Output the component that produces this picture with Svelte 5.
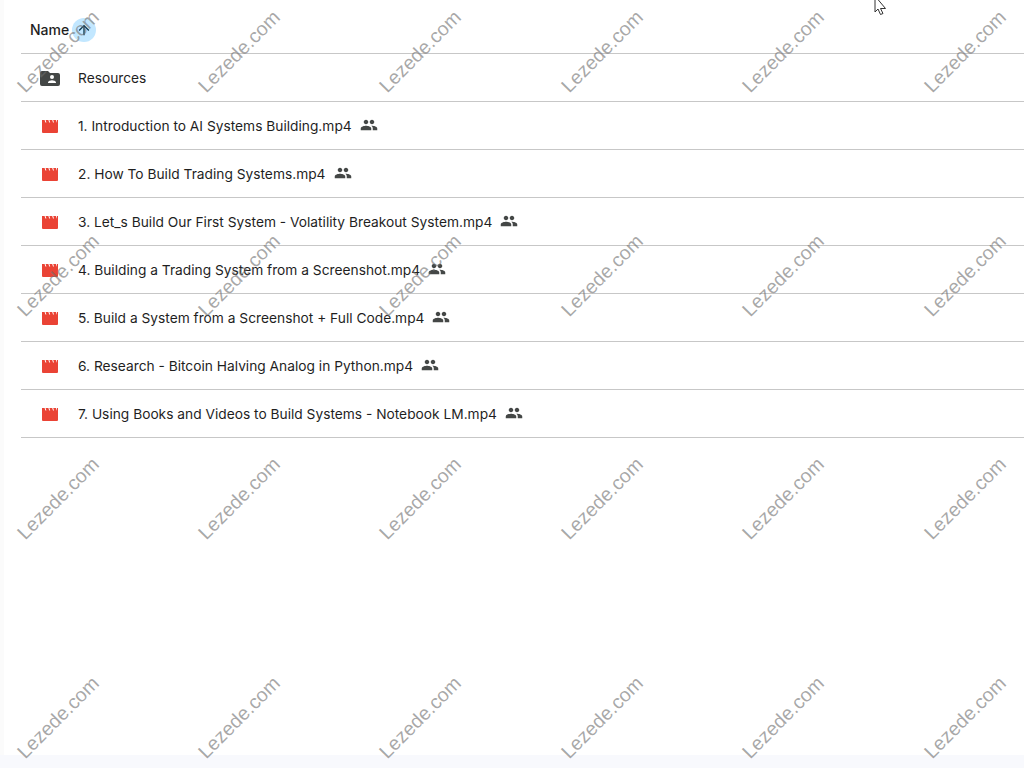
<script lang="ts">
  const files = [
    '1. Introduction to AI Systems Building.mp4',
    '2. How To Build Trading Systems.mp4',
    '3. Let_s Build Our First System - Volatility Breakout System.mp4',
    '4. Building a Trading System from a Screenshot.mp4',
    '5. Build a System from a Screenshot + Full Code.mp4',
    '6. Research - Bitcoin Halving Analog in Python.mp4',
    '7. Using Books and Videos to Build Systems - Notebook LM.mp4'
  ];

  // 6 columns x 4 rows of the repeated stamp
  const marks = Array.from({ length: 24 });
</script>

<div class="page">
  <div class="list">
    <div class="head">
      <span class="head-label">Name</span>
      <span class="sort">
        <svg viewBox="0 0 24 24" width="16" height="16"><path d="M20 12l-1.41-1.41L13 16.17V4h-2v12.17l-5.58-5.59L4 12l8 8 8-8z" transform="rotate(180 12 12)" fill="#0b3a55" /></svg>
      </span>
    </div>

    <div class="row">
      <span class="icon">
        <svg viewBox="0 0 20 16" width="20" height="16"><path d="M2 1h6l2 2h8a2 2 0 0 1 2 2v9a2 2 0 0 1-2 2H2a2 2 0 0 1-2-2V3a2 2 0 0 1 2-2z" fill="#444746" /><circle cx="12" cy="7" r="2" fill="#fff" /><path d="M8 12.5c0-1.5 2.6-2.3 4-2.3s4 .8 4 2.3v.5H8z" fill="#fff" /></svg>
      </span>
      <span class="name">Resources</span>
    </div>

    {#each files as file}
      <div class="row">
        <span class="icon movie">
          <svg viewBox="0 0 16 13" width="16" height="13"><path d="M0 0h2.600l.8 2.500h1L3.600 0h2.800l.8 2.500h1L7.400 0h2.800l.8 2.500h1L11.200 0h2.800l.8 2.500h.2V0H16v12a1 1 0 0 1-1 1H1a1 1 0 0 1-1-1z" fill="#ea4335" /></svg>
        </span>
        <span class="name">{file}</span>
        <svg class="shared" viewBox="0 0 24 24" width="18" height="18"><path d="M16 11c1.660 0 2.990-1.340 2.990-3S17.660 5 16 5s-3 1.340-3 3 1.340 3 3 3zm-8 0c1.660 0 2.990-1.340 2.990-3S9.660 5 8 5 5 6.340 5 8s1.340 3 3 3zm0 2c-2.330 0-7 1.170-7 3.500V19h14v-2.500C15 14.170 10.330 13 8 13zm8 0c-.29 0-.62.020-.97.050C16.190 13.890 17 15.020 17 16.500V19h6v-2.500c0-2.330-4.670-3.500-7-3.500z" fill="#444746" /></svg>
      </div>
    {/each}
  </div>

  <div class="strip-left"></div>
  <div class="strip-bottom"></div>

  <div class="marks">
    {#each marks as _}
      <div class="mark"><span>Lezede.com</span></div>
    {/each}
  </div>

  <svg class="cursor" viewBox="0 0 14 15" width="14" height="15"><path d="M1 -4v16l3-3 2.500 5.500 2.500-1-2.500-5h5z" fill="#fff" stroke="#333" stroke-width="1" /></svg>
</div>

<style>
  :global(body) {
    margin: 0;
    background: #fff;
  }

  .page {
    position: relative;
    width: 1024px;
    height: 768px;
    overflow: hidden;
    background: #fff;
    font-family: Inter, Roboto, "Liberation Sans", sans-serif;
    color: #1f1f1f;
  }

  .list {
    margin-left: 21px;
  }

  .head {
    display: flex;
    align-items: center;
    height: 54px;
    padding-left: 9px;
    padding-top: 6px;
    box-sizing: border-box;
    border-bottom: 1px solid #c7c7c7;
    font-size: 14px;
    font-weight: 500;
  }

  .sort {
    display: flex;
    align-items: center;
    justify-content: center;
    width: 24px;
    height: 24px;
    margin-left: 3px;
    border-radius: 50%;
    background: #c2e7ff;
  }

  .row {
    display: flex;
    align-items: center;
    height: 48px;
    box-sizing: border-box;
    border-bottom: 1px solid #c7c7c7;
    font-size: 13.750px;
  }

  .icon {
    display: flex;
    justify-content: center;
    width: 20px;
    margin-left: 19px;
    margin-right: 18px;
  }

  .movie {
    padding-top: 1px;
  }

  .name {
    white-space: nowrap;
  }

  .shared {
    margin-left: 8px;
    margin-bottom: 2px;
  }

  .strip-left {
    position: absolute;
    left: 0;
    top: 0;
    bottom: 0;
    width: 4px;
    background: #fbfbfb;
  }

  .strip-bottom {
    position: absolute;
    left: 0;
    right: 0;
    bottom: 0;
    height: 13px;
    background: #f8f9fd;
  }

  .marks {
    position: absolute;
    left: -33px;
    top: -61px;
    display: grid;
    grid-template-columns: repeat(6, 181.400px);
    grid-template-rows: 224px 224px 222px 216px;
    pointer-events: none;
  }

  .mark {
    display: flex;
    align-items: center;
    justify-content: center;
    font-family: "Liberation Sans", sans-serif;
    font-size: 19.500px;
    color: rgba(110, 110, 110, 0.6);
  }

  .mark span {
    transform: rotate(-45deg);
    white-space: nowrap;
  }

  .cursor {
    position: absolute;
    left: 874px;
    top: 0;
  }
</style>
